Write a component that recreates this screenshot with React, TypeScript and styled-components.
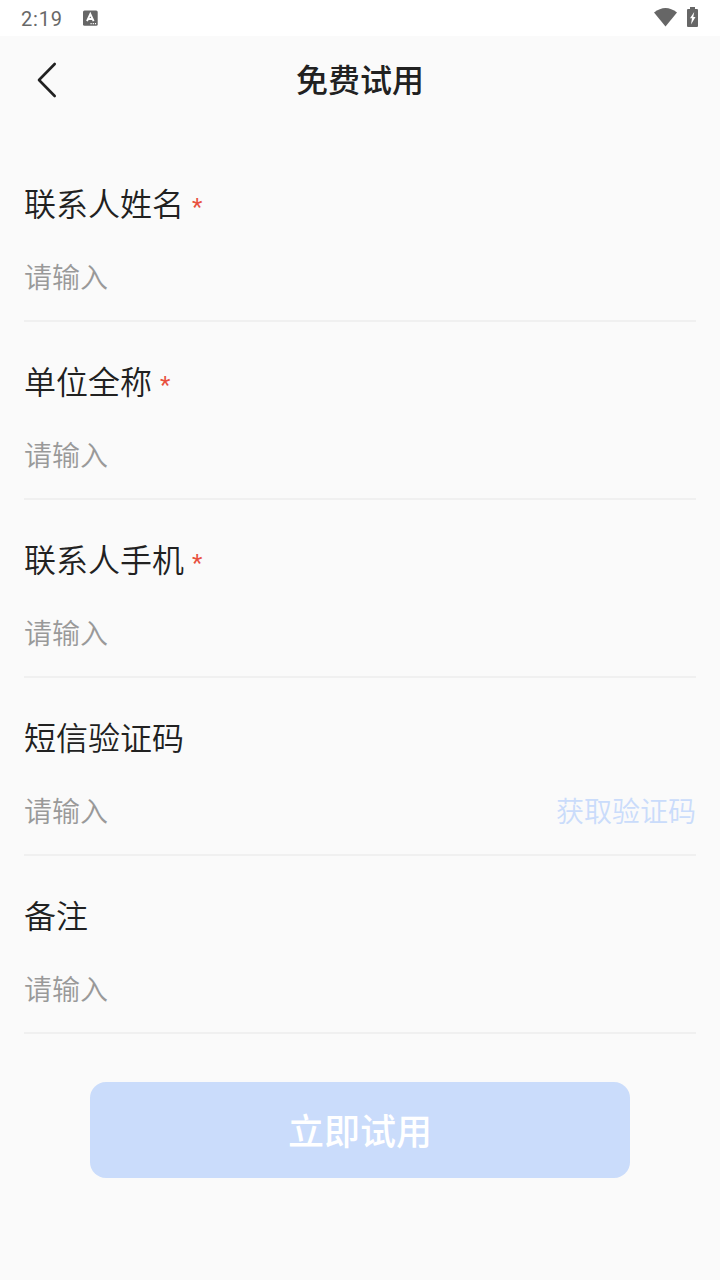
import React from 'react';
import styled, { createGlobalStyle, css } from 'styled-components';

const Global = createGlobalStyle`
  * { box-sizing: border-box; }
  body { margin: 0; background: #fafafa; font-family: Roboto, "Noto Sans CJK SC", sans-serif; color: #212121; }
`;

const Screen = styled.main`
  height: 1280px;
  background: #fafafa;
  display: flex;
  flex-direction: column;
`;

const StatusBar = styled.header`
  height: 36px;
  background: #fff;
  display: flex;
  align-items: center;
  padding: 0 22px 0 21px;
  color: #686868;
`;

const Clock = styled.span`
  font-size: 20px;
  line-height: 36px;
  font-weight: 450;
  letter-spacing: 0.8px;
  width: 61px;
  padding-top: 2px;
`;

const StatusIcons = styled.div`
  margin-left: auto;
  display: flex;
  gap: 10px;
  padding-bottom: 2px;
`;

const NavBar = styled.nav`
  height: 88px;
  display: grid;
  grid-template-columns: 96px 1fr 96px;
  align-items: center;
`;

const BackButton = styled.button`
  border: 0;
  padding: 0 0 0 36px;
  background: none;
  display: flex;
`;

const Title = styled.h1`
  margin: 0;
  padding-top: 2px;
  text-align: center;
  font-size: 32px;
  line-height: 48px;
  font-weight: 500;
`;

const Form = styled.form`
  padding: 57px 24px 0;
  display: flex;
  flex-direction: column;
`;

const Field = styled.div`
  height: 178px;
`;

const Label = styled.label`
  display: flex;
  font-size: 32px;
  line-height: 48px;
  font-weight: 350;
`;

const Required = styled.span`
  margin-left: 8px;
  font-size: 24px;
  line-height: 52px;
  height: 48px;
  font-weight: 400;
  color: #e8503f;
`;

const InputRow = styled.div`
  margin-top: 3px;
  height: 90px;
  padding-top: 5px;
  border-bottom: 2px solid #f0f0f0;
  display: flex;
  align-items: center;
`;

const inputText = css`
  font-family: inherit;
  font-size: 28px;
  line-height: 42px;
  font-weight: 350;
`;

const Input = styled.input`
  ${inputText}
  flex: 1;
  min-width: 0;
  border: 0;
  padding: 0;
  background: none;
  outline: none;
  &::placeholder { color: #999; opacity: 1; }
`;

const CodeButton = styled.button`
  ${inputText}
  border: 0;
  padding: 0;
  background: none;
  color: #cadcfb;
`;

const Submit = styled.button`
  width: 540px;
  height: 96px;
  margin: 11px auto 0;
  padding: 0 0 2px;
  border: 0;
  border-radius: 16px;
  background: #cadcfb;
  color: #fff;
  font-family: inherit;
  font-size: 36px;
  font-weight: 500;
`;

const fields = [
  { label: '联系人姓名', required: true },
  { label: '单位全称', required: true },
  { label: '联系人手机', required: true },
  { label: '短信验证码', code: true },
  { label: '备注' },
];

export default function App() {
  return (
    <Screen>
      <Global />
      <StatusBar>
        <Clock>2:19</Clock>
        <svg width="16" height="16" viewBox="0 0 16 16">
          <rect x="1" y="0.400" width="14.700" height="15.400" rx="1.500" fill="#666" />
          <path d="M5 11.200 8.300 4 11.600 11.200M6.300 9h4" fill="none" stroke="#fff" strokeWidth="1.900" />
          <path d="M8.500 13.600h1.200m1 0h1.200m1 0h1.200" stroke="#fff" strokeWidth="1.100" />
        </svg>
        <StatusIcons>
          <svg width="23" height="20" viewBox="0 0 23 20">
            <path d="M0 5.500Q11.500-3.500 23 5.500L11.500 19.500Z" fill="#666" />
          </svg>
          <svg width="11" height="20" viewBox="0 0 11 20">
            <path d="M3 0h5v2h2q1 0 1 1v16q0 1-1 1H1q-1 0-1-1V3q0-1 1-1h2Z" fill="#666" />
            <path d="M7.200 5 3 11.200h2L4 17.500 8.500 10H6.300Z" fill="#fff" />
          </svg>
        </StatusIcons>
      </StatusBar>
      <NavBar>
        <BackButton type="button" aria-label="返回">
          <svg width="22" height="36" viewBox="0 0 22 36">
            <path d="M18.700 2 3 18l15.700 16" fill="none" stroke="#212121" strokeWidth="2.600" strokeLinecap="round" strokeLinejoin="round" />
          </svg>
        </BackButton>
        <Title>免费试用</Title>
      </NavBar>
      <Form>
        {fields.map((f, i) => (
          <Field key={f.label}>
            <Label htmlFor={`field-${i}`}>
              {f.label}
              {f.required && <Required>*</Required>}
            </Label>
            <InputRow>
              <Input id={`field-${i}`} placeholder="请输入" />
              {f.code && <CodeButton type="button">获取验证码</CodeButton>}
            </InputRow>
          </Field>
        ))}
        <Submit type="button">立即试用</Submit>
      </Form>
    </Screen>
  );
}
